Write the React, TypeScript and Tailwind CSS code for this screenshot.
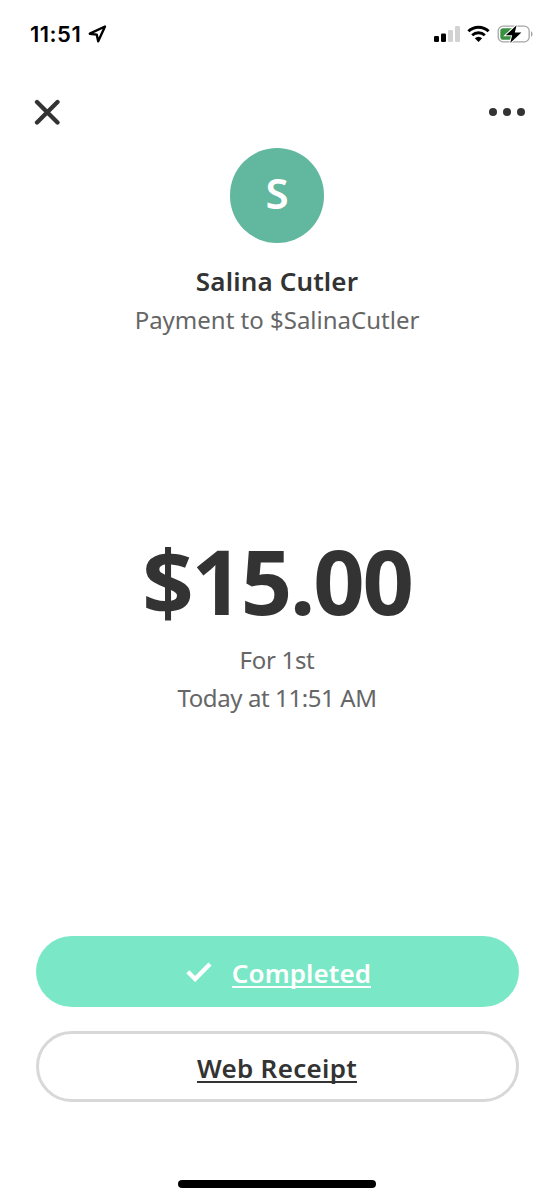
const StatusBar = () => (
  <div className="flex h-[68px] shrink-0 items-center justify-between pl-[30px] pr-[20px] text-black">
    <div className="flex items-center gap-[5px]">
      <span className="w-[53px] whitespace-nowrap font-['Inter',sans-serif] text-[22px] font-semibold leading-[26px] tracking-[0.5px]">
        11:51
      </span>
      <svg width="19" height="18" viewBox="0 0 19 18" fill="none" aria-hidden="true">
        <path
          d="M17 1.5 1.8 8.7 8.7 9.6 10.2 16.3Z"
          stroke="currentColor"
          strokeWidth="2.4"
          strokeLinejoin="round"
        />
      </svg>
    </div>
    <div className="flex items-center">
      <svg width="26" height="18" viewBox="0 0 26 18" aria-hidden="true">
        <rect x="0" y="11" width="5" height="6" rx="1.3" />
        <rect x="7" y="8.5" width="5" height="8.5" rx="1.3" />
        <rect x="14" y="5" width="5" height="12" rx="1.3" fill="#d2d2d2" />
        <rect x="21" y="1" width="5" height="16" rx="1.3" fill="#d2d2d2" />
      </svg>
      <svg className="ml-[7px]" width="23" height="18" viewBox="0 0 23 18" fill="none" aria-hidden="true">
        <path d="M1.4 6.3a14.4 14.4 0 0 1 20.2 0" stroke="currentColor" strokeWidth="3" />
        <path d="M5.2 10.3a9 9 0 0 1 12.6 0" stroke="currentColor" strokeWidth="2.8" />
        <path d="M11.5 17 7.8 13.2a5.3 5.3 0 0 1 7.4 0Z" fill="currentColor" />
      </svg>
      <svg className="ml-[7px]" width="37" height="20" viewBox="0 0 37 20" aria-hidden="true">
        <rect x="1.2" y="2.2" width="31" height="15.6" rx="4.8" fill="none" stroke="#a5a5a5" strokeWidth="1.3" />
        <path d="M34 7.2c2 .7 2 4.9 0 5.6Z" fill="#a5a5a5" />
        <rect x="3.3" y="4.3" width="14" height="11.4" rx="2.8" fill="#3b9142" />
        <path
          d="M19.6 1.2 8.8 11.3h6.4L13.2 18.9 24.4 8.6h-6.6Z"
          stroke="#fff"
          strokeWidth="2"
          paintOrder="stroke"
        />
      </svg>
    </div>
  </div>
);

const Header = () => (
  <header className="flex h-[80px] shrink-0 items-start justify-between pl-[34px] pr-[29px] pt-[31px] text-[#333]">
    <button type="button" aria-label="Close">
      <svg width="27" height="27" viewBox="0 0 27 27" fill="none">
        <path d="m3 3 20.5 20.5M23.5 3 3 23.5" stroke="currentColor" strokeWidth="4.3" strokeLinecap="round" />
      </svg>
    </button>
    <button type="button" aria-label="More" className="flex gap-[6px] pt-[9px]">
      <span className="size-[8px] rounded-full bg-[#333]" />
      <span className="size-[8px] rounded-full bg-[#333]" />
      <span className="size-[8px] rounded-full bg-[#333]" />
    </button>
  </header>
);

export default function App() {
  return (
    <div className="flex h-[1200px] w-[554px] flex-col bg-white font-['Noto_Sans',sans-serif] text-[#333]">
      <StatusBar />
      <Header />

      <section className="flex flex-col items-center">
        <div className="flex size-[94.5px] items-center justify-center rounded-full bg-[#61b89e] pb-[5px] text-[42px] font-semibold text-white">
          S
        </div>
        <h1 className="mt-[18.5px] whitespace-nowrap text-[26px] font-semibold leading-[40px] tracking-[0.15px]">
          Salina Cutler
        </h1>
        <p className="whitespace-nowrap text-[24px] leading-[38px] text-[#666]">
          Payment to $SalinaCutler
        </p>
      </section>

      <section className="mt-[186px] flex flex-col items-center">
        <p className="whitespace-nowrap text-[90px] font-bold leading-[110px] tracking-[-2.2px]">$15.00</p>
        <p className="mt-[6px] whitespace-nowrap text-[24px] leading-[38px] tracking-[-0.3px] text-[#666]">For 1st</p>
        <p className="whitespace-nowrap text-[24px] leading-[38px] tracking-[-0.4px] text-[#666]">
          Today at 11:51 AM
        </p>
      </section>

      <div className="mt-auto flex flex-col gap-[24px] px-[35.5px] pb-[78px]">
        <button
          type="button"
          className="flex h-[71px] items-center justify-center gap-[20px] rounded-full bg-[#7ae8c6] pl-[3px] text-[26px] font-semibold tracking-[0.1px] text-white"
        >
          <svg width="26" height="20" viewBox="0 0 26 20" fill="none" aria-hidden="true">
            <path d="m1.8 9.8 7.3 7.2L24 2" stroke="currentColor" strokeWidth="4.4" />
          </svg>
          <span className="mt-[5px] border-b-2 border-white leading-[25px]">Completed</span>
        </button>
        <button
          type="button"
          className="flex h-[71px] items-center justify-center rounded-full border-[3px] border-[#d8d8d8] text-[26px] font-semibold tracking-[0.3px]"
        >
          <span className="mt-[5px] border-b-2 border-[#333] leading-[25px]">Web Receipt</span>
        </button>
      </div>
      <div className="mb-[12px] h-[8px] w-[198px] shrink-0 self-center rounded-full bg-black" />
    </div>
  );
}
